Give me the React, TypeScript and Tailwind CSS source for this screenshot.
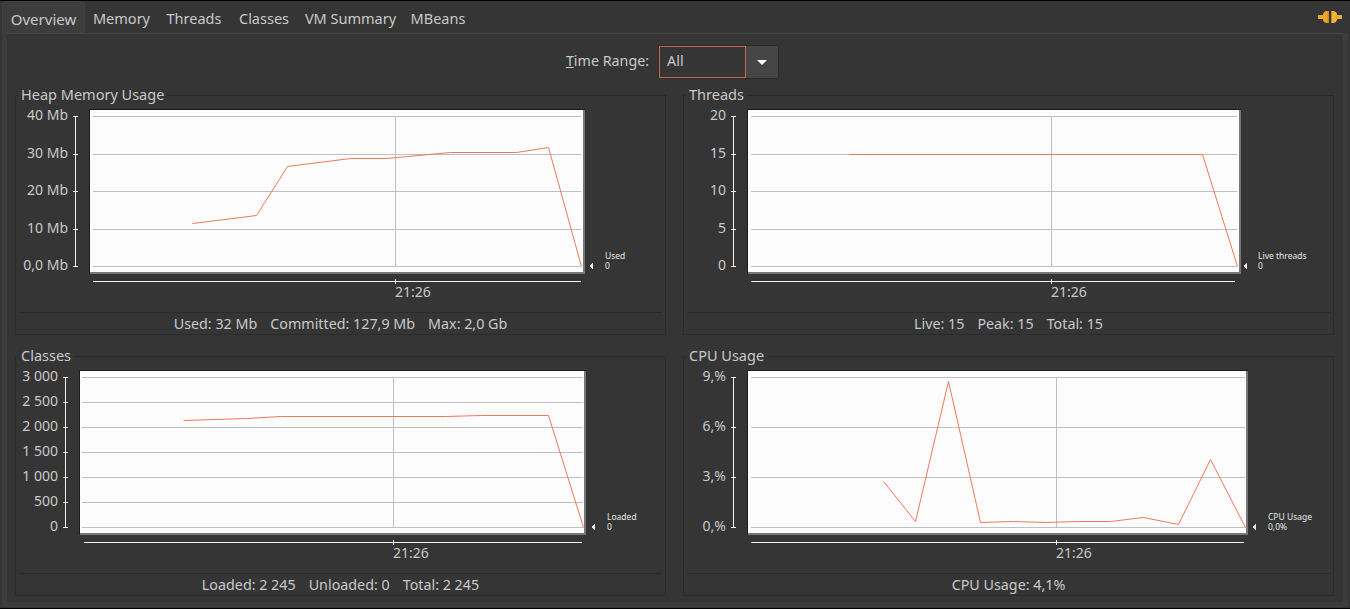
const font = { fontFamily: '"Noto Sans", sans-serif' };

type ChartSpec = {
  ox: number;
  oy: number;
  plot: [number, number, number, number];
  gridX: [number, number];
  vert: number;
  axisX: number;
  xAxis: [number, number];
  labels: { t: string; y: number }[];
  data: [number, number][];
  legend: [string, string];
  triX: number;
  legX: number;
};

function Chart({ s }: { s: ChartSpec }) {
  const [l, t, r, b] = s.plot;
  const ys = s.labels.map((a) => a.y);
  const xaY = b + 7;
  const last = ys[ys.length - 1];
  return (
    <svg viewBox={`${s.ox} ${s.oy} 643 216`} className="block h-[216px] w-[643px]" shapeRendering="crispEdges">
      <rect x={l} y={t} width={r - l} height={b - t} fill="#1c1c1c" />
      <rect x={l + 1} y={t + 1} width={r - l - 1} height={b - t - 1} fill="#777777" />
      <rect x={l + 1} y={t + 1} width={r - l - 3} height={b - t - 3} fill="#fcfcfc" />
      {ys.map((y) => (
        <rect key={y} x={s.gridX[0]} y={y} width={s.gridX[1] - s.gridX[0]} height={1} fill="#bfbfbf" />
      ))}
      <rect x={s.vert} y={ys[0]} width={1} height={last - ys[0]} fill="#bfbfbf" />
      <polyline
        points={s.data.map((p) => `${p[0] + 0.5},${p[1] + 0.5}`).join(" ")}
        fill="none"
        stroke="#f0785a"
        strokeWidth={1}
        shapeRendering="auto"
      />
      <rect x={s.axisX} y={ys[0]} width={1} height={last - ys[0] + 1} fill="#f2f2f2" />
      {ys.map((y) => (
        <rect key={y} x={s.axisX - 2} y={y} width={5} height={1} fill="#f2f2f2" />
      ))}
      {s.labels.map((a) => (
        <text key={a.t} x={s.axisX - 7} y={a.y + 4} textAnchor="end" fontSize={14} fill="#c9c9c9" style={font}>
          {a.t}
        </text>
      ))}
      <rect x={s.xAxis[0]} y={xaY} width={s.xAxis[1] - s.xAxis[0]} height={1} fill="#f2f2f2" />
      <rect x={s.vert} y={xaY - 2} width={1} height={5} fill="#f2f2f2" />
      <text x={s.vert} y={xaY + 16} fontSize={14} fill="#c9c9c9" style={font}>
        21:26
      </text>
      <polygon points={`${s.triX},${last} ${s.triX + 4},${last - 3} ${s.triX + 4},${last + 4}`} fill="#e8e8e8" />
      <text x={s.legX} y={last - 7} fontSize={8.5} fill="#e6e6e6" style={font}>
        {s.legend[0]}
      </text>
      <text x={s.legX} y={last + 3} fontSize={8.5} fill="#e6e6e6" style={font}>
        {s.legend[1]}
      </text>
    </svg>
  );
}

function Panel({ title, spec, items }: { title: string; spec: ChartSpec; items: string[] }) {
  return (
    <div className="relative flex h-[240px] flex-col border border-[#2b2b2b] px-[3px]">
      <div className="absolute left-[2px] top-[-12px] bg-[#353535] px-[3px] text-[14.5px] leading-[20px] text-[#c9c9c9]">{title}</div>
      <Chart s={spec} />
      <div className="flex h-[22px] items-center justify-center gap-[13px] border-t border-[#2b2b2b] text-[14.3px] text-[#c9c9c9]">
        {items.map((i) => (
          <span key={i}>{i}</span>
        ))}
      </div>
    </div>
  );
}

const heap: ChartSpec = {
  ox: 19,
  oy: 96,
  plot: [89, 109, 585, 274],
  gridX: [93, 581],
  vert: 395,
  axisX: 75,
  xAxis: [93, 581],
  labels: [
    { t: "40 Mb", y: 116 },
    { t: "30 Mb", y: 154 },
    { t: "20 Mb", y: 191 },
    { t: "10 Mb", y: 229 },
    { t: "0,0 Mb", y: 266 },
  ],
  data: [[192, 223], [256, 215], [287, 166], [350, 158], [386, 158], [450, 152], [516, 152], [548, 147], [581, 266]],
  legend: ["Used", "0"],
  triX: 589,
  legX: 605,
};
const threads: ChartSpec = {
  ox: 687,
  oy: 96,
  plot: [747, 109, 1241, 274],
  gridX: [751, 1237],
  vert: 1051,
  axisX: 733,
  xAxis: [751, 1235],
  labels: [
    { t: "20", y: 116 },
    { t: "15", y: 154 },
    { t: "10", y: 191 },
    { t: "5", y: 229 },
    { t: "0", y: 266 },
  ],
  data: [[849, 154], [1202, 154], [1237, 266]],
  legend: ["Live threads", "0"],
  triX: 1243,
  legX: 1258,
};
const classes: ChartSpec = {
  ox: 19,
  oy: 357,
  plot: [79, 370, 586, 535],
  gridX: [82, 583],
  vert: 393,
  axisX: 65,
  xAxis: [84, 582],
  labels: [
    { t: "3 000", y: 377 },
    { t: "2 500", y: 402 },
    { t: "2 000", y: 427 },
    { t: "1 500", y: 452 },
    { t: "1 000", y: 477 },
    { t: "500", y: 502 },
    { t: "0", y: 527 },
  ],
  data: [[183, 420], [247, 418], [280, 416], [445, 416], [480, 415], [548, 415], [583, 527]],
  legend: ["Loaded", "0"],
  triX: 591,
  legX: 607,
};
const cpu: ChartSpec = {
  ox: 687,
  oy: 357,
  plot: [747, 370, 1248, 535],
  gridX: [751, 1245],
  vert: 1056,
  axisX: 733,
  xAxis: [751, 1244],
  labels: [
    { t: "9,%", y: 377 },
    { t: "6,%", y: 427 },
    { t: "3,%", y: 477 },
    { t: "0,%", y: 527 },
  ],
  data: [[883, 481], [915, 521], [948, 381], [980, 522], [1013, 521], [1045, 522], [1078, 521], [1110, 521], [1143, 517], [1178, 524], [1210, 459], [1245, 527]],
  legend: ["CPU Usage", "0,0%"],
  triX: 1252,
  legX: 1268,
};

const tabs = [
  { t: "Memory", w: "w-[73px]" },
  { t: "Threads", w: "w-[72px]" },
  { t: "Classes", w: "w-[68px]" },
  { t: "VM Summary", w: "w-[105px]" },
  { t: "MBeans", w: "w-[70px]" },
];

function Plug() {
  return (
    <svg viewBox="0 0 24 14" className="h-[14px] w-[24px]">
      <rect x="0" y="5" width="6" height="4" fill="#e9a92a" />
      <path d="M5 4 Q6 1 9 1 L11 1 L11 13 L9 13 Q6 13 5 10 Z" fill="#e9a92a" />
      <rect x="9.5" y="1" width="1.5" height="12" fill="#c98a17" />
      <rect x="13" y="1" width="1.5" height="12" fill="#c98a17" />
      <path d="M14 1 L15 1 Q18 1 19 4 L19 10 Q18 13 15 13 L14 13 Z" fill="#f0b534" />
      <rect x="18" y="5" width="6" height="4" fill="#e9a92a" />
    </svg>
  );
}

export default function App() {
  return (
    <div className="flex h-[609px] w-[1350px] flex-col overflow-hidden border-b border-t border-black bg-[#353535]" style={font}>
      <div className="flex h-[32px] items-stretch pl-[2px] pr-[8px]">
        <div className="flex w-[83px] items-center justify-center rounded-t border border-b-0 border-[#414141] bg-[#3d3d3d] pt-[4px] text-[15px] text-[#c9c9c9]">Overview</div>
        {tabs.map((t) => (
          <div key={t.t} className={`flex items-center justify-center pt-[4px] text-[14.5px] text-[#c9c9c9] ${t.w}`}>
            {t.t}
          </div>
        ))}
        <div className="ml-auto flex items-center">
          <Plug />
        </div>
      </div>
      <div className="mx-[2px] mb-[1px] flex-1 border-[5px] border-t-0 border-[#3c3c3c]">
        <div className="h-full border-t border-[#474747] bg-[#353535] px-[8px]">
          <div className="flex h-[61px] items-start justify-center pr-[5px] pt-[11px]">
            <div className="flex items-center gap-[9px]">
              <span className="pb-[3px] text-[14.3px] text-[#c9c9c9]">
                <span className="underline">T</span>ime Range:
              </span>
              <div className="flex h-[34px] w-[121px] rounded-[3px] border border-[#2b2b2b]">
                <div className="flex w-[87px] items-center border border-[#c0694c] pb-[3px] pl-[7px] text-[14.3px] text-[#c9c9c9]">All</div>
                <div className="flex flex-1 items-center justify-center rounded-r-[2px] bg-[#464646]">
                  <div className="h-0 w-0 border-x-[5px] border-t-[5px] border-x-transparent border-t-white" />
                </div>
              </div>
            </div>
          </div>
          <div className="grid grid-cols-[651px_651px] gap-x-[17px] gap-y-[21px]">
            <Panel title="Heap Memory Usage" spec={heap} items={["Used: 32 Mb", "Committed: 127,9 Mb", "Max: 2,0 Gb"]} />
            <Panel title="Threads" spec={threads} items={["Live: 15", "Peak: 15", "Total: 15"]} />
            <Panel title="Classes" spec={classes} items={["Loaded: 2 245", "Unloaded: 0", "Total: 2 245"]} />
            <Panel title="CPU Usage" spec={cpu} items={["CPU Usage: 4,1%"]} />
          </div>
        </div>
      </div>
    </div>
  );
}
